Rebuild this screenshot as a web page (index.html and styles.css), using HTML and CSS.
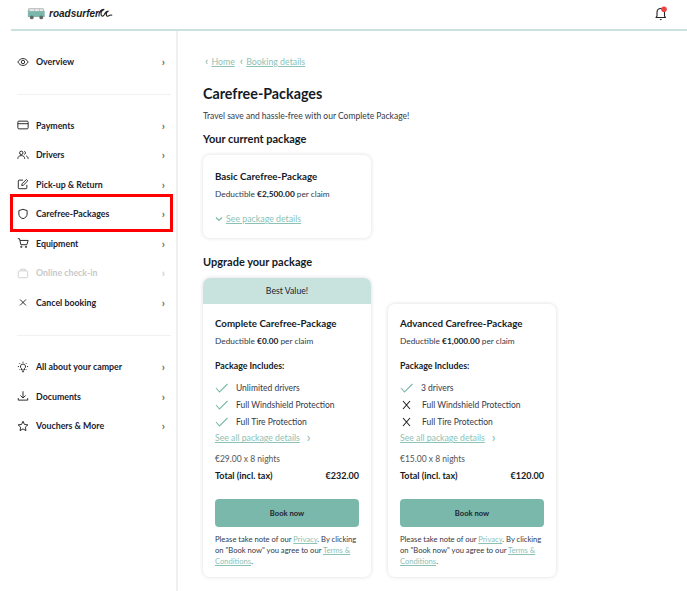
FILE: index.html
```
<!DOCTYPE html>
<html lang="en">
<head>
<meta charset="utf-8">
<title>Carefree-Packages</title>
<link rel="stylesheet" href="styles.css">
</head>
<body>
<header class="topbar">
  <div class="logo">
    <svg class="van" width="19" height="13" viewBox="0 0 22 14"><path d="M2 1.500h17l1.500 3.500v6H1V3z" fill="#7ab8ab"/><path d="M2 1h17l.8 3.500H1.200z" fill="#b9b9b9"/><rect x="3" y="2" width="5" height="2" fill="#eee"/><rect x="9" y="2" width="5" height="2" fill="#eee"/><rect x="15" y="2" width="3.500" height="2" fill="#eee"/><circle cx="5.500" cy="11.500" r="2.200" fill="#666"/><circle cx="16.500" cy="11.500" r="2.200" fill="#666"/></svg>
    <span class="logo-text">roadsurfer</span>
    <svg class="wave" width="16" height="10" viewBox="0 0 18 11"><path d="M1 9.500C1 4 3 1.500 7 1.500c-2.500 1-4 3.500-3.500 6 .5 2 2.500 2 3.500 0C8 5 9 3.500 11 3.500c-1.500 1-2 3-1.500 4.500.5 1.500 2 1.500 3 .5.800-.8 2-1 3.500-.5" fill="none" stroke="#222" stroke-width="1.300"/></svg>
  </div>
  <div class="bell">
    <svg width="14" height="15" viewBox="0 0 14 15"><path d="M2 11.500h9.500L10.500 10V6.500C10.500 4 9 2.500 6.800 2.500S3 4 3 6.500V10z" fill="none" stroke="#222" stroke-width="1.100" stroke-linejoin="round"/><path d="M5.500 13h2.600L6.800 14.300z" fill="#222"/><circle cx="10" cy="3.300" r="2.800" fill="#ef4444"/></svg>
  </div>
</header>
<div class="layout">
  <aside class="sidebar">
    <nav class="nav-group">
      <a class="nav-item"><svg class="nav-icon" viewBox="0 0 14 14"><path d="M1 7c1.500-2.600 3.500-4 6-4s4.500 1.400 6 4c-1.500 2.600-3.500 4-6 4S2.500 9.600 1 7z"/><circle cx="7" cy="7" r="2"/></svg><span class="nav-label">Overview</span><span class="chev">›</span></a>
    </nav>
    <hr class="nav-rule">
    <nav class="nav-group nav-main">
      <a class="nav-item"><svg class="nav-icon" viewBox="0 0 14 14"><rect x="1" y="2.500" width="12" height="9" rx="1.200"/><path d="M1 5.500h12"/></svg><span class="nav-label">Payments</span><span class="chev">›</span></a>
      <a class="nav-item"><svg class="nav-icon" viewBox="0 0 14 14"><circle cx="5" cy="4.500" r="2"/><path d="M1 11.500c0-2.500 1.500-3.800 4-3.800s4 1.300 4 3.800"/><path d="M8.500 2.600a2 2 0 0 1 0 3.800M10.500 8c1.500.5 2.500 1.600 2.500 3.500"/></svg><span class="nav-label">Drivers</span><span class="chev">›</span></a>
      <a class="nav-item"><svg class="nav-icon" viewBox="0 0 14 14"><path d="M11.500 8v3.500a1 1 0 0 1-1 1h-8a1 1 0 0 1-1-1v-8a1 1 0 0 1 1-1H7"/><path d="M5.500 8.800l.4-2L11 1.700l1.600 1.600-5.100 5.100z"/></svg><span class="nav-label">Pick-up &amp; Return</span><span class="chev">›</span></a>
      <a class="nav-item"><svg class="nav-icon" viewBox="0 0 14 14"><path d="M7 1.500l4.800 1.500v4c0 2.800-2 4.500-4.800 5.500C4.200 11.500 2.200 9.800 2.200 7V3z"/></svg><span class="nav-label">Carefree-Packages</span><span class="chev">›</span></a>
      <a class="nav-item"><svg class="nav-icon" viewBox="0 0 14 14"><path d="M1 2h2l1.500 7h7L13 4H3.500"/><circle cx="5" cy="11.500" r=".8"/><circle cx="10.500" cy="11.500" r=".8"/></svg><span class="nav-label">Equipment</span><span class="chev">›</span></a>
      <a class="nav-item is-disabled"><svg class="nav-icon" viewBox="0 0 14 14"><rect x="1.500" y="4.500" width="11" height="8" rx="1.200"/><path d="M4.500 4.500V2.500h5v2"/></svg><span class="nav-label">Online check-in</span><span class="chev">›</span></a>
      <a class="nav-item"><svg class="nav-icon" viewBox="0 0 14 14"><path d="M3.500 4l7 7M10.500 4l-7 7"/></svg><span class="nav-label">Cancel booking</span><span class="chev">›</span></a>
    </nav>
    <hr class="nav-rule">
    <nav class="nav-group">
      <a class="nav-item"><svg class="nav-icon" viewBox="0 0 14 14"><path d="M7 3.500a3 3 0 0 1 1.600 5.500v1.500H5.400V9A3 3 0 0 1 7 3.500zM5.800 12.500h2.400M7 .8v1.200M1 6.500h1.300M11.700 6.500H13M2.800 2.500l.9.900M11.200 2.500l-.9.900M2.800 10.500l.9-.9M11.200 10.500l-.9-.9"/></svg><span class="nav-label">All about your camper</span><span class="chev">›</span></a>
      <a class="nav-item"><svg class="nav-icon" viewBox="0 0 14 14"><path d="M7 1.500v7.500M4 6.500L7 9.300l3-2.800M1.500 9.500v2.300h11V9.500"/></svg><span class="nav-label">Documents</span><span class="chev">›</span></a>
      <a class="nav-item"><svg class="nav-icon" viewBox="0 0 14 14"><path d="M7 1.500l1.700 3.700 4 .5-3 2.700.8 4L7 10.400l-3.500 2 .8-4-3-2.700 4-.5z"/></svg><span class="nav-label">Vouchers &amp; More</span><span class="chev">›</span></a>
    </nav>
  </aside>
  <main class="content">
    <div class="crumbs"><span class="crumb-chev">‹</span><a class="link">Home</a><span class="crumb-chev">‹</span><a class="link">Booking details</a></div>
    <h1 class="page-title">Carefree-Packages</h1>
    <p class="lead">Travel save and hassle-free with our Complete Package!</p>
    <h2 class="section-title">Your current package</h2>
    <section class="card card-current">
      <h3 class="card-title">Basic Carefree-Package</h3>
      <p class="deductible">Deductible <b>€2,500.00</b> per claim</p>
      <div class="see-details">
        <svg class="down" width="8" height="6" viewBox="0 0 8 6"><path d="M1 1.500l3 3 3-3" fill="none" stroke="#7ab8ab" stroke-width="1.200"/></svg>
        <a class="link">See package details</a>
      </div>
    </section>
    <h2 class="section-title upgrade-title">Upgrade your package</h2>
    <div class="offers">
      <section class="card offer">
        <div class="ribbon">Best Value!</div>
        <div class="offer-body">
          <h3 class="card-title">Complete Carefree-Package</h3>
          <p class="deductible">Deductible <b>€0.00</b> per claim</p>
          <h4 class="includes">Package Includes:</h4>
          <ul class="features">
            <li class="feature"><svg class="mark" viewBox="0 0 13 10"><path d="M1 5l3.500 4L12.500 1"/></svg>Unlimited drivers</li>
            <li class="feature"><svg class="mark" viewBox="0 0 13 10"><path d="M1 5l3.500 4L12.500 1"/></svg>Full Windshield Protection</li>
            <li class="feature"><svg class="mark" viewBox="0 0 13 10"><path d="M1 5l3.500 4L12.500 1"/></svg>Full Tire Protection</li>
          </ul>
          <div class="all-details"><a class="link">See all package details</a><span class="more">›</span></div>
          <p class="rate">€29.00 x 8 nights</p>
          <div class="total"><span>Total (incl. tax)</span><span>€232.00</span></div>
          <button class="book">Book now</button>
          <p class="legal">Please take note of our <a class="link">Privacy</a>. By clicking on "Book now" you agree to our <a class="link">Terms &amp; Conditions</a>.</p>
        </div>
      </section>
      <section class="card offer">
        <div class="offer-body">
          <h3 class="card-title">Advanced Carefree-Package</h3>
          <p class="deductible">Deductible <b>€1,000.00</b> per claim</p>
          <h4 class="includes">Package Includes:</h4>
          <ul class="features">
            <li class="feature"><svg class="mark" viewBox="0 0 13 10"><path d="M1 5l3.500 4L12.500 1"/></svg>3 drivers</li>
            <li class="feature"><svg class="mark mark-x" viewBox="0 0 13 10"><path d="M3 1l7 8M10 1l-7 8"/></svg>Full Windshield Protection</li>
            <li class="feature"><svg class="mark mark-x" viewBox="0 0 13 10"><path d="M3 1l7 8M10 1l-7 8"/></svg>Full Tire Protection</li>
          </ul>
          <div class="all-details"><a class="link">See all package details</a><span class="more">›</span></div>
          <p class="rate">€15.00 x 8 nights</p>
          <div class="total"><span>Total (incl. tax)</span><span>€120.00</span></div>
          <button class="book">Book now</button>
          <p class="legal">Please take note of our <a class="link">Privacy</a>. By clicking on "Book now" you agree to our <a class="link">Terms &amp; Conditions</a>.</p>
        </div>
      </section>
    </div>
  </main>
</div>
<div class="highlight"></div>
</body>
</html>
```
FILE: styles.css
```
* { box-sizing: border-box; }
html, body { margin: 0; padding: 0; }
body {
  width: 687px;
  height: 591px;
  overflow: hidden;
  position: relative;
  background: #fff;
  color: #1c2230;
  font-family: Lato, "Noto Sans", sans-serif;
  font-size: 9px;
}
.topbar {
  display: flex;
  align-items: center;
  justify-content: space-between;
  height: 31px;
  margin-left: 11px;
  padding: 0 19px 3px 16px;
  border-bottom: 2px solid #c8e3dd;
}
.logo { display: flex; align-items: center; }
.van { margin-right: 3px; }
.logo-text {
  font-family: "Liberation Sans", sans-serif;
  font-style: italic;
  font-weight: 700;
  font-size: 10px;
  color: #1c1c1c;
}
.wave { margin-left: -1px; }
.bell { display: flex; }
.layout { display: flex; height: 560px; margin-left: 11px; }
.sidebar {
  width: 167px;
  flex: none;
  padding: 16px 5px 0 6px;
  border-right: 2px solid #f0f0f0;
}
.nav-group { display: flex; flex-direction: column; }
.nav-main { padding-bottom: 1px; }
.nav-item {
  display: flex;
  align-items: center;
  height: 29.500px;
  font-weight: 700;
  font-size: 8.800px;
  color: #1c2230;
}
.nav-icon {
  width: 12px;
  height: 12px;
  flex: none;
  margin-right: 7px;
  fill: none;
  stroke: #222;
  stroke-width: 1.100;
}
.nav-label { flex: 1; }
.chev { color: #666; font-size: 11px; line-height: 1; margin-right: 6px; }
.is-disabled { color: #c9c9c9; }
.is-disabled .nav-icon { stroke: #cfcfcf; }
.is-disabled .chev { color: #ccc; }
.nav-rule { border: 0; border-top: 1px solid #f1f1f1; margin: 17px 0 16px; }
.content { flex: 1; padding: 23px 0 0 25px; }
.crumbs { display: flex; align-items: center; gap: 3px; height: 14px; font-size: 8.800px; }
.crumb-chev { color: #7ab8ab; font-size: 12px; line-height: 1; margin-left: 2px; }
.link { color: #8cc2b6; text-decoration: underline; }
.page-title { margin: 16px 0 0; font-size: 14.300px; line-height: 20px; font-weight: 700; color: #141a26; }
.lead { margin: 6px 0 0; font-size: 8.500px; line-height: 12px; color: #33394a; }
.section-title { margin: 9px 0 0; font-size: 11px; line-height: 15px; font-weight: 700; color: #141a26; }
.card {
  background: #fff;
  border-radius: 7px;
  box-shadow: 0 0 4px rgba(0, 0, 0, .14);
}
.card-current { width: 168px; height: 83px; margin-top: 9px; padding: 15px 12px 0; }
.card-title { margin: 0; font-size: 9.750px; line-height: 13px; font-weight: 700; color: #141a26; }
.deductible { margin: 5px 0 0; font-size: 8.300px; line-height: 12px; color: #33394a; }
.deductible b { font-weight: 700; color: #141a26; }
.see-details { display: flex; align-items: center; gap: 3px; margin-top: 13px; font-size: 8.800px; line-height: 12px; }
.upgrade-title { margin-top: 16px; }
.offers { display: flex; align-items: flex-end; gap: 17px; margin-top: 9px; }
.offer { width: 168px; overflow: hidden; }
.ribbon {
  height: 26px;
  background: #c8e3dd;
  text-align: center;
  font-size: 8.700px;
  line-height: 26px;
  color: #1c2230;
}
.offer-body { padding: 13px 12px 10px; }
.includes { margin: 13px 0 0; font-size: 8.800px; line-height: 12px; font-weight: 700; color: #141a26; }
.features { list-style: none; margin: 7px 0 0; padding: 0; }
.feature { display: flex; align-items: center; height: 17px; font-size: 8.500px; color: #33394a; }
.mark { width: 13px; height: 10px; flex: none; margin-right: 8px; fill: none; stroke: #7ab8ab; stroke-width: 1.100; }
.mark-x { stroke: #222; margin-right: 9px; }
.all-details { display: flex; align-items: center; gap: 7px; height: 15px; font-size: 8.700px; }
.more { color: #7ab8ab; font-size: 13px; line-height: 1; }
.rate { margin: 8px 0 0; font-size: 8.500px; line-height: 12px; color: #555; }
.total { display: flex; justify-content: space-between; margin-top: 5px; font-size: 9px; line-height: 12px; font-weight: 700; color: #141a26; }
.book {
  display: block;
  width: 100%;
  height: 28px;
  margin-top: 17px;
  padding: 0;
  border: 0;
  border-radius: 4px;
  background: #7ab8ab;
  color: #1c2230;
  font-family: inherit;
  font-size: 7.600px;
  font-weight: 700;
}
.legal { margin: 7px 0 0; font-size: 7.600px; line-height: 11px; color: #33394a; }
.highlight {
  position: absolute;
  left: 10px;
  top: 194px;
  width: 163px;
  height: 38px;
  border: 3px solid #f00;
}
```
